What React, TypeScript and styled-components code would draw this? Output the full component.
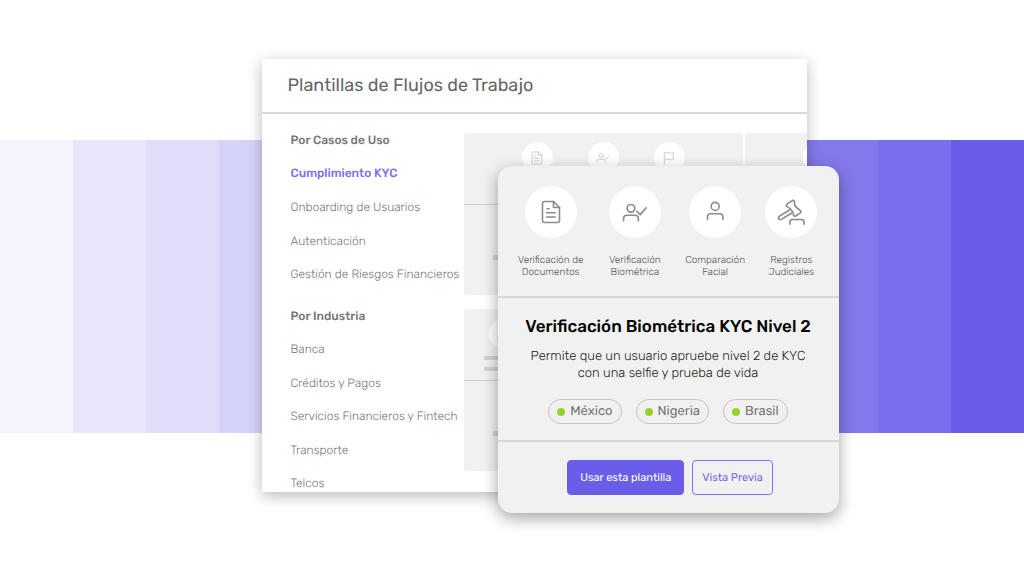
import React from 'react';
import styled, { createGlobalStyle, css } from 'styled-components';

const GlobalStyle = createGlobalStyle`
  *, *::before, *::after { box-sizing: border-box; }
  body {
    margin: 0;
    background: #fff;
    font-family: Rubik, Roboto, "Liberation Sans", sans-serif;
    text-rendering: geometricPrecision;
  }
  h1, h2, h3, p, ul { margin: 0; padding: 0; }
  ul { list-style: none; }
`;

const Scene = styled.main`
  display: grid;
  grid-template-columns: minmax(0, 1fr);
  align-items: center;
  min-height: 100vh;
  overflow: hidden;
`;

const Band = styled.div`
  grid-area: 1 / 1;
  display: flex;
  height: 293px;
`;

const Stripe = styled.div<{ $tone: string }>`
  flex: 1;
  background: ${(p) => p.$tone};
`;

const Stage = styled.div`
  grid-area: 1 / 1;
  justify-self: center;
  display: grid;
  grid-template-columns: 236px 309px 32px;
  grid-template-rows: 107px auto 21px;
  margin-left: 76px;
  z-index: 1;
`;

const Window = styled.section`
  grid-column: 1 / 3;
  grid-row: 1 / 3;
  contain: size;
  overflow: hidden;
  background: #fff;
  box-shadow: 0 4px 14px rgba(0, 0, 0, 0.27);
`;

const WindowHeader = styled.header`
  padding: 14px 26px 15px;
  border-bottom: 2px solid #dadada;
`;

const WindowTitle = styled.h1`
  font-size: 18px;
  line-height: 24px;
  font-weight: 400;
  color: #666;
`;

const WindowBody = styled.div`
  display: flex;
  align-items: flex-start;
`;

const Sidebar = styled.nav`
  flex: 0 0 202px;
  min-width: 0;
  display: grid;
  gap: 8px;
  padding: 9px 0 0 29px;
`;

const Group = styled.ul<{ $height: number }>`
  display: grid;
  grid-auto-rows: 1fr;
  align-items: center;
  height: ${(p) => p.$height}px;
  white-space: nowrap;
  font-size: 12px;
  line-height: 20px;
`;

const GroupTitle = styled.h2`
  font-size: 12px;
  line-height: 20px;
  font-weight: 500;
  color: #777;
`;

const NavLink = styled.a<{ $active?: boolean }>`
  color: #777;
  font-weight: 300;
  text-decoration: none;
  ${(p) =>
    p.$active &&
    css`
      color: #7d70ea;
      font-weight: 500;
    `}
`;

const CardGrid = styled.div`
  display: grid;
  grid-template-columns: 279px 279px;
  gap: 14px 2px;
  padding-top: 19px;
`;

const Card = styled.article`
  height: 162px;
  overflow: hidden;
  border-radius: 4px;
  background: #f1f1f1;
`;

const CardTop = styled.div`
  display: flex;
  justify-content: center;
  gap: 26px;
  height: 72px;
  padding-top: 9px;
  border-bottom: 1px solid #d0d0d0;
`;

const CardStep = styled.div`
  display: flex;
  flex-direction: column;
  align-items: center;
  gap: 7px;
`;

const Disc = styled.span<{ $size: number; $tone: string; $icon: number }>`
  display: grid;
  place-items: center;
  width: ${(p) => p.$size}px;
  height: ${(p) => p.$size}px;
  border-radius: 50%;
  background: #fff;
  color: ${(p) => p.$tone};
  svg {
    width: ${(p) => p.$icon}px;
    height: ${(p) => p.$icon}px;
  }
`;

const Bar = styled.span<{ $wide?: boolean }>`
  display: block;
  width: ${(p) => (p.$wide ? '221px' : '40px')};
  height: ${(p) => (p.$wide ? '5px' : '4px')};
  background: #d2d2d2;
`;

const CardBottom = styled.div`
  display: flex;
  justify-content: center;
  padding-top: 50px;
`;

const Dialog = styled.section`
  grid-column: 2 / 4;
  grid-row: 2 / 4;
  z-index: 1;
  border-radius: 14px;
  background: #f1f1f1;
  box-shadow: 0 5px 16px rgba(0, 0, 0, 0.36);
`;

const Checks = styled.ul`
  display: grid;
  grid-template-columns: 21fr 21fr 19fr 19fr;
  padding: 20px 9px 18px 11px;
  border-bottom: 2px solid #d6d6d6;
`;

const Check = styled.li`
  display: flex;
  flex-direction: column;
  align-items: center;
  gap: 16px;
  font-size: 10px;
  line-height: 12px;
  font-weight: 300;
  text-align: center;
  color: #555;
  white-space: pre-line;
`;

const Summary = styled.div`
  display: flex;
  flex-direction: column;
  align-items: center;
  padding: 17px 12px 16px;
  border-bottom: 2px solid #d6d6d6;
  text-align: center;
`;

const SummaryTitle = styled.h2`
  font-size: 17px;
  line-height: 24px;
  font-weight: 500;
  color: #000;
  white-space: nowrap;
`;

const SummaryText = styled.p`
  margin-top: 9px;
  font-size: 13px;
  line-height: 17px;
  font-weight: 300;
  color: #222;
  white-space: pre-line;
`;

const Chips = styled.ul`
  display: flex;
  gap: 14px;
  margin-top: 17px;
`;

const Chip = styled.li`
  display: flex;
  align-items: center;
  gap: 5px;
  height: 25px;
  padding: 0 8px;
  border: 1px solid #c4c4c4;
  border-radius: 13px;
  font-size: 13px;
  line-height: 20px;
  color: #757575;
  &::before {
    content: '';
    width: 8px;
    height: 8px;
    border-radius: 50%;
    background: #97d12b;
  }
`;

const Actions = styled.div`
  display: flex;
  justify-content: center;
  gap: 8px;
  padding: 18px 0 18px 4px;
`;

const Button = styled.button<{ $primary?: boolean }>`
  height: 35px;
  padding: 0 ${(p) => (p.$primary ? 12 : 9)}px;
  border: 1px solid ${(p) => (p.$primary ? '#6a5ee8' : '#7d72ec')};
  border-radius: 4px;
  background: ${(p) => (p.$primary ? '#6a5ee8' : 'transparent')};
  color: ${(p) => (p.$primary ? '#fff' : '#7468ea')};
  font-family: inherit;
  font-size: 11px;
  line-height: 16px;
  text-rendering: inherit;
  cursor: pointer;
`;

const stroke = {
  viewBox: '0 0 24 24',
  fill: 'none',
  stroke: 'currentColor',
  strokeLinecap: 'round' as const,
  strokeLinejoin: 'round' as const,
  'aria-hidden': true,
};

const DocIcon = () => (
  <svg {...stroke} strokeWidth="1.6">
    <path d="M14.5 1.5H5.5A2 2 0 0 0 3.5 3.5v17a2 2 0 0 0 2 2h13a2 2 0 0 0 2-2V7.500z" />
    <path d="M14.500 1.500v6h6M8 8.800h2M7.600 12.800h8.600M7.600 17h8.600" />
  </svg>
);

const UserCheckIcon = () => (
  <svg {...stroke} strokeWidth="1.6">
    <circle cx="8.6" cy="8" r="3.7" />
    <path d="M1.500 20v-2.400a3 3 0 0 1 3-3h8.200a3 3 0 0 1 3 3V20M14.200 10.800l3.300 3.200L23.300 7.500" />
  </svg>
);

const UserIcon = () => (
  <svg {...stroke} strokeWidth="1.6">
    <circle cx="12.200" cy="6.400" r="4" />
    <path d="M4.500 19.800v-3a3 3 0 0 1 3-3h9.400a3 3 0 0 1 3 3v3" />
  </svg>
);

const GavelIcon = () => (
  <svg {...stroke} strokeWidth="1.400">
    <path d="M8.600 5.200 13 2.200Q14.200 1.600 14.700 2.700L15 4.600Q15.200 7.400 18 9.200L20.300 11Q21 12 20.100 12.700L16 15.400Q14.800 15.900 14.200 14.800L13.600 12.300Q12.600 9.800 10.400 8.500L8.300 7.200Q7.500 6 8.600 5.200z" />
    <path d="M10.800 10.300 2 15.700Q.800 16.800 1.500 18 2.400 19 3.700 18.300L12.600 12.900" />
    <path d="M11 22.500v-1.800a2.300 2.300 0 0 1 2.300-2.300h7.600a2.300 2.300 0 0 1 2.300 2.300v1.800" />
  </svg>
);

const FlagIcon = () => (
  <svg {...stroke} strokeWidth="1.600">
    <path d="M4 22V3q4-2 8 0t8.500 0L18.500 8.500l2 6q-4.500 1.500-8.500 0t-8 0" />
  </svg>
);

const tones = [
  '#f4f4fe', '#e9e7fc', '#dfddf9', '#d5d3f9', '#cbc7f7', '#c1bcf6', '#b7b1f4',
  '#ada6f3', '#a39af1', '#988ff0', '#8e84ee', '#8479ec', '#7a6eec', '#6a5ee8',
];

const groups = [
  {
    title: 'Por Casos de Uso',
    height: 168,
    items: ['Cumplimiento KYC', 'Onboarding de Usuarios', 'Autenticación', 'Gestión de Riesgos Financieros'],
  },
  {
    title: 'Por Industria',
    height: 201,
    items: ['Banca', 'Créditos y Pagos', 'Servicios Financieros y Fintech', 'Transporte', 'Telcos'],
  },
];

const cards = [
  [DocIcon, UserCheckIcon, FlagIcon],
  [DocIcon, UserCheckIcon, FlagIcon],
  [UserCheckIcon, DocIcon, UserIcon, FlagIcon],
  [DocIcon, UserCheckIcon, FlagIcon],
];

const checks = [
  { label: 'Verificación de\nDocumentos', Icon: DocIcon, size: 24 },
  { label: 'Verificación\nBiométrica', Icon: UserCheckIcon, size: 25 },
  { label: 'Comparación\nFacial', Icon: UserIcon, size: 24 },
  { label: 'Registros\nJudiciales', Icon: GavelIcon, size: 28 },
];

export default function App() {
  return (
    <>
      <GlobalStyle />
      <Scene>
        <Band>
          {tones.map((tone) => (
            <Stripe key={tone} $tone={tone} />
          ))}
        </Band>
        <Stage>
          <Window>
            <WindowHeader>
              <WindowTitle>Plantillas de Flujos de Trabajo</WindowTitle>
            </WindowHeader>
            <WindowBody>
              <Sidebar>
                {groups.map((group) => (
                  <Group key={group.title} $height={group.height}>
                    <li>
                      <GroupTitle>{group.title}</GroupTitle>
                    </li>
                    {group.items.map((item) => (
                      <li key={item}>
                        <NavLink href="#" $active={item === 'Cumplimiento KYC'}>
                          {item}
                        </NavLink>
                      </li>
                    ))}
                  </Group>
                ))}
              </Sidebar>
              <CardGrid>
                {cards.map((icons, index) => (
                  <Card key={index}>
                    <CardTop>
                      {icons.map((Icon, step) => (
                        <CardStep key={step}>
                          <Disc $size={31} $icon={14} $tone="#cfcfcf">
                            <Icon />
                          </Disc>
                          <Bar />
                          <Bar />
                        </CardStep>
                      ))}
                    </CardTop>
                    <CardBottom>
                      <Bar $wide />
                    </CardBottom>
                  </Card>
                ))}
              </CardGrid>
            </WindowBody>
          </Window>
          <Dialog>
            <Checks>
              {checks.map(({ label, Icon, size }) => (
                <Check key={label}>
                  <Disc $size={52} $icon={size} $tone="#8c8c8c">
                    <Icon />
                  </Disc>
                  <span>{label}</span>
                </Check>
              ))}
            </Checks>
            <Summary>
              <SummaryTitle>Verificación Biométrica KYC Nivel 2</SummaryTitle>
              <SummaryText>{'Permite que un usuario apruebe nivel 2 de KYC\ncon una selfie y prueba de vida'}</SummaryText>
              <Chips>
                <Chip>México</Chip>
                <Chip>Nigeria</Chip>
                <Chip>Brasil</Chip>
              </Chips>
            </Summary>
            <Actions>
              <Button type="button" $primary>
                Usar esta plantilla
              </Button>
              <Button type="button">Vista Previa</Button>
            </Actions>
          </Dialog>
        </Stage>
      </Scene>
    </>
  );
}
